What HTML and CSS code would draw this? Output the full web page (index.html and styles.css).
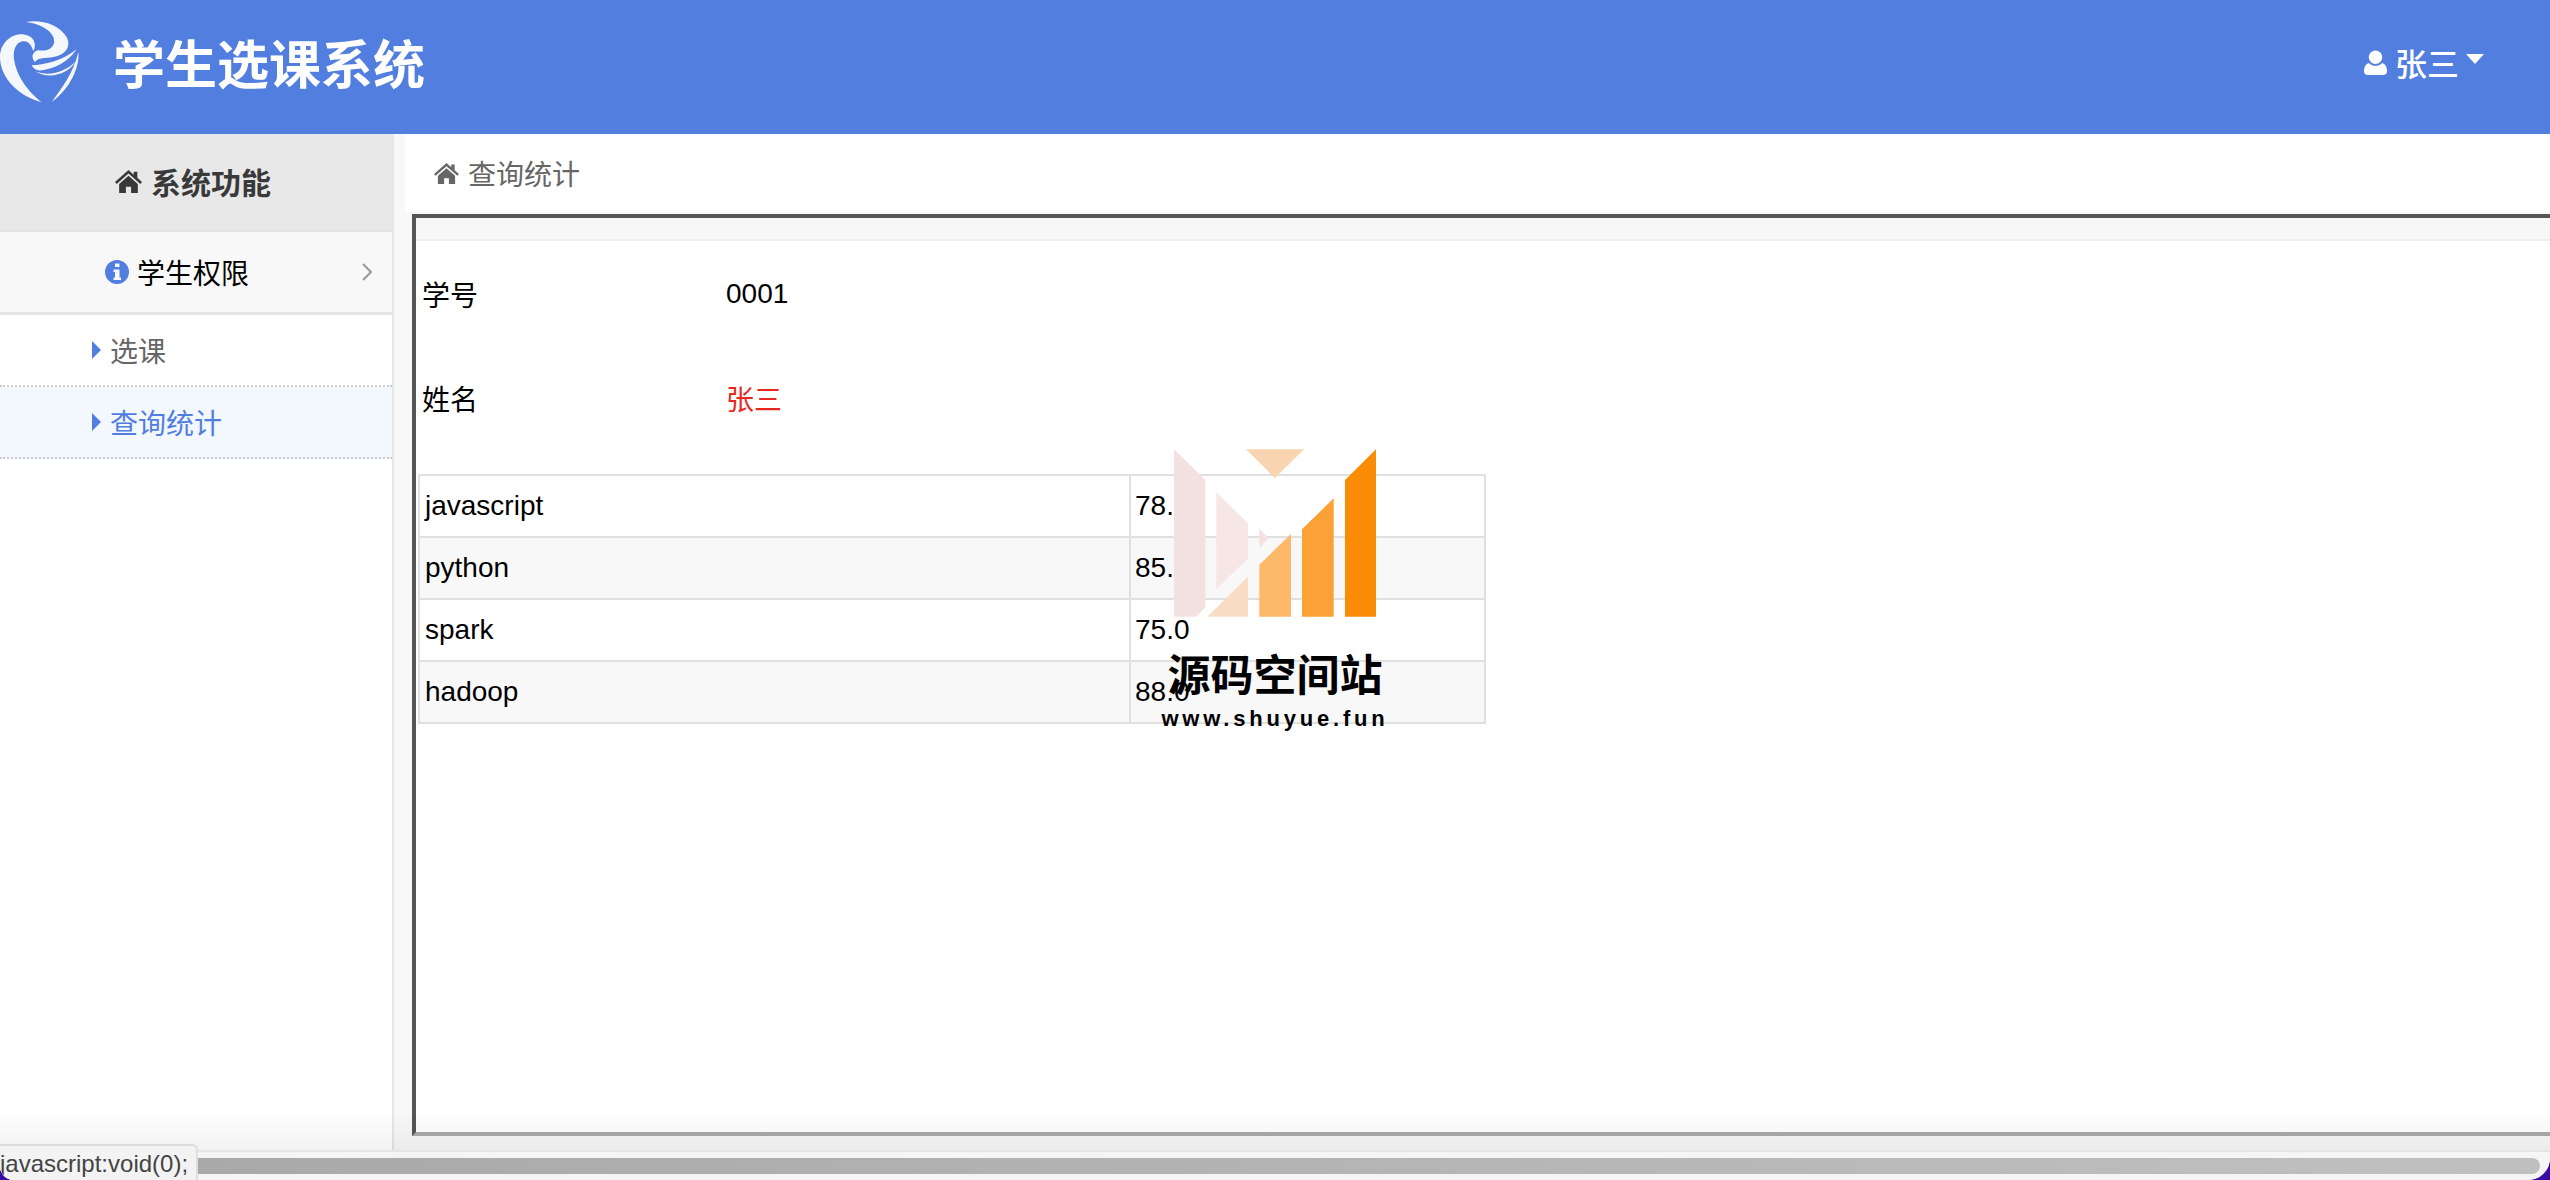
FILE: index.html
```html
<!DOCTYPE html>
<html lang="zh">
<head>
  <meta charset="UTF-8">
  <title>学生选课系统</title>
  <link rel="stylesheet" href="styles.css">
</head>
<body>
  <div class="window">
    <header class="topbar">
      <div class="brand">
        <svg class="logo" viewBox="0 0 270 300">
          <g fill="#f4f8fd">
            <path d="M125 270C60 255 0 200 0 135C0 90 40 60 75 68C100 72 112 95 100 118C95 100 85 85 68 88C48 92 38 115 42 140C48 190 85 240 125 270Z"/>
            <path d="M78 30C120 22 175 35 200 75C215 105 195 130 160 135C135 140 115 135 105 150C90 135 100 118 115 115C150 120 170 100 160 75C148 50 115 35 78 30Z"/>
            <path d="M95 160C130 160 190 145 230 112C205 150 160 172 125 175C110 178 100 170 95 160Z"/>
            <path d="M105 178C150 195 195 180 228 148C205 185 150 205 105 178Z"/>
            <path d="M235 120C240 170 205 235 155 270C185 230 222 180 235 120Z"/>
          </g>
        </svg>
        <span class="brand-name">学生选课系统</span>
      </div>
      <a class="user-menu" href="javascript:void(0);">
        <svg class="icon-user" viewBox="0 0 24 26"><circle cx="12" cy="7.500" r="7"/><path d="M5 13.500c2 2 4.500 3 7 3s5-1 7-3c3 1 5 4 5 8v1c0 2-1.500 3.500-3.500 3.500h-17C1.500 26 0 24.500 0 22.500v-1c0-4 2-7 5-8z"/></svg>
        <span class="user-name">张三</span>
        <svg class="icon-caret" viewBox="0 0 18 10"><path d="M0 0h18L9 10z"/></svg>
      </a>
    </header>

    <div class="main">
      <aside class="sidebar">
        <div class="side-title">
          <svg class="icon-home" viewBox="0 0 26 22"><path d="M13 0l5 4.400V1.500h3.500v6l4.500 4-1.600 1.800L13 3.400 1.600 13.300 0 11.500z"/><path d="M13 5.500l9 7.800V22h-6.500v-6h-5v6H4v-8.700z"/></svg>
          <span>系统功能</span>
        </div>
        <div class="side-group">
          <svg class="icon-info" viewBox="0 0 24 24"><path fill-rule="evenodd" d="M12 0a12 12 0 1 0 0 24 12 12 0 0 0 0-24zM10 3.500h4.500v3.500H10zM8.500 9.500h6v8H16V20H8.500v-2.500H10V12H8.500z"/></svg>
          <span class="side-group-name">学生权限</span>
          <svg class="icon-chevron" viewBox="0 0 10 18"><path d="M1 1l8 8-8 8" fill="none" stroke="#999" stroke-width="2"/></svg>
        </div>
        <a class="side-link" href="#"><i class="arrow"></i>选课</a>
        <a class="side-link active" href="#"><i class="arrow"></i>查询统计</a>
      </aside>

      <section class="content">
        <div class="crumb">
          <svg class="icon-home small" viewBox="0 0 26 22"><path d="M13 0l5 4.400V1.500h3.500v6l4.500 4-1.600 1.800L13 3.400 1.600 13.300 0 11.500z"/><path d="M13 5.500l9 7.800V22h-6.500v-6h-5v6H4v-8.700z"/></svg>
          <span>查询统计</span>
        </div>
        <div class="frame">
          <div class="frame-top"></div>
          <div class="frame-body">
            <div class="info-row"><span class="info-label">学号</span><span>0001</span></div>
            <div class="info-row"><span class="info-label">姓名</span><span class="red">张三</span></div>
            <table class="score-table">
              <tr><td class="course">javascript</td><td>78.0</td></tr>
              <tr><td class="course">python</td><td>85.0</td></tr>
              <tr><td class="course">spark</td><td>75.0</td></tr>
              <tr><td class="course">hadoop</td><td>88.0</td></tr>
            </table>
          </div>
        </div>
      </section>
    </div>

    <div class="hscroll"><div class="hscroll-thumb"></div></div>

    <div class="watermark">
      <svg class="wm-mark" viewBox="222 88 606 502">
        <polygon fill="#f3e0e0" points="222,88 316,180 316,562 288,590 222,590"/>
        <polygon fill="#f6e6e6" points="349,217 444,310 444,415 349,508"/>
        <polygon fill="#f6e0e0" points="478,327 506,355 478,384"/>
        <polygon fill="#f8d4b0" points="438,88 612,88 525,174"/>
        <polygon fill="#f8dcc4" points="322,590 444,470 444,590"/>
        <polygon fill="#fdb96a" points="478,434 573,342 573,590 478,590"/>
        <polygon fill="#fca135" points="606,328 701,235 701,590 606,590"/>
        <polygon fill="#fb8c05" points="735,180 828,88 828,590 735,590"/>
      </svg>
      <div class="wm-name">源码空间站</div>
      <div class="wm-url">www.shuyue.fun</div>
    </div>

    <div class="bottom-fade"></div>
    <div class="status-tip">javascript:void(0);</div>
  </div>
</body>
</html>
```

FILE: styles.css
```css
html, body {
  margin: 0;
  padding: 0;
  height: 100%;
  overflow: hidden;
  background-color: #3a0ca3;
}
body {
  font-family: "Liberation Sans", "Noto Sans CJK SC", sans-serif;
  font-size: 28px;
  color: #000;
}
a {
  text-decoration: none;
}
.window {
  position: relative;
  display: flex;
  flex-direction: column;
  height: 1180px;
  overflow: hidden;
  background-color: #fff;
  border-radius: 0 0 22px 14px;
}

/* header */
.topbar {
  flex: none;
  display: flex;
  align-items: center;
  justify-content: space-between;
  box-sizing: border-box;
  height: 134px;
  padding-bottom: 10px;
  background-color: #527ee0;
  color: #fff;
}
.brand {
  display: flex;
  align-items: center;
}
.logo {
  width: 90px;
  height: 100px;
  filter: blur(0.7px);
}
.brand-name {
  margin: -2px 0 0 23px;
  font-size: 52px;
  font-weight: bold;
}
.user-menu {
  display: flex;
  align-items: center;
  margin-right: 66px;
  color: #fff;
  font-size: 32px;
}
.user-name {
  font-weight: 500;
}
.icon-user {
  width: 23px;
  height: 27px;
  margin-right: 8px;
  fill: #fff;
}
.icon-caret {
  width: 18px;
  height: 10px;
  margin: -6px 0 0 7px;
  fill: #fff;
}

.main {
  flex: 1;
  display: flex;
  min-height: 0;
  background-color: #f8f8f8;
}

/* sidebar */
.sidebar {
  flex: none;
  width: 392px;
  background-color: #fff;
  border-right: 2px solid #e5e5e5;
}
.side-title {
  display: flex;
  align-items: center;
  justify-content: center;
  height: 94px;
  padding: 0 6px 2px 0;
  background-color: #e8e8e8;
  border-bottom: 2px solid #e2e2e2;
  color: #393939;
  font-size: 30px;
  font-weight: bold;
}
.icon-home {
  width: 27px;
  height: 23px;
  margin-right: 9px;
  fill: #393939;
}
.icon-home.small {
  width: 25px;
  height: 21px;
  fill: #666;
}
.side-group {
  display: flex;
  align-items: center;
  height: 80px;
  padding-left: 105px;
  background-color: #f8f8f8;
  border-bottom: 3px solid #e5e5e5;
}
.icon-info {
  width: 24px;
  height: 24px;
  margin-right: 8px;
  fill: #527ee0;
}
.side-group-name {
  flex: 1;
}
.icon-chevron {
  width: 10px;
  height: 18px;
  margin-right: 20px;
}
.side-link {
  display: flex;
  align-items: center;
  height: 70px;
  padding-left: 92px;
  border-bottom: 2px dotted #ccc;
  color: #666;
}
.side-link.active {
  background-color: #f3f7fe;
  color: #527ee0;
}
.arrow {
  width: 0;
  height: 0;
  margin-right: 9px;
  border-top: 9px solid transparent;
  border-bottom: 9px solid transparent;
  border-left: 9px solid #527ee0;
}

/* content */
.content {
  flex: 1;
  display: flex;
  flex-direction: column;
  min-width: 0;
  margin-left: 11px;
}
.crumb {
  flex: none;
  display: flex;
  align-items: center;
  height: 78px;
  padding-left: 29px;
  background-color: #fff;
  color: #666;
}
.crumb .icon-home {
  margin-right: 9px;
}
.frame {
  flex: 1;
  margin: 2px 0 14px 7px;
  border-style: solid;
  border-width: 4px 0 4px 4px;
  border-color: #555 #555 #aaa #555;
  background-color: #fff;
}
.frame-top {
  height: 21px;
  background-color: #f7f7f7;
  border-bottom: 2px solid #eee;
}
.frame-body {
  margin-left: 2px;
}
.info-row {
  display: flex;
  align-items: center;
  box-sizing: border-box;
  height: 104px;
  padding: 2px 0 0 4px;
}
.info-label {
  width: 304px;
}
.red {
  color: #e8281e;
}
.score-table {
  width: 1068px;
  margin-top: 25px;
  border-collapse: collapse;
}
.score-table td {
  height: 60px;
  padding: 0 4px;
  border: 2px solid #e0e0e0;
}
.score-table tr:nth-child(even) {
  background-color: #f8f8f8;
}
.score-table .course {
  width: 700px;
  padding-left: 5px;
}

/* bottom scrollbar */
.hscroll {
  flex: none;
  height: 28px;
  padding-left: 198px;
  background-color: #f5f5f5;
  border-top: 2px solid #e5e5e5;
}
.hscroll-thumb {
  width: 2342px;
  height: 16px;
  margin-top: 6px;
  border-radius: 0 8px 8px 0;
  background: linear-gradient(to right, #a9a9a9, #c0c0c0);
}

/* overlays */
.watermark {
  position: absolute;
  left: 1163px;
  top: 449px;
  width: 224px;
  display: flex;
  flex-direction: column;
  align-items: center;
}
.wm-mark {
  display: block;
  width: 202px;
  height: 168px;
}
.wm-name {
  margin-top: 29px;
  font-size: 43px;
  line-height: 60px;
  font-weight: bold;
  white-space: nowrap;
}
.wm-url {
  font-size: 22px;
  line-height: 26px;
  font-weight: bold;
  letter-spacing: 3.800px;
  white-space: nowrap;
}
.bottom-fade {
  position: absolute;
  left: 0;
  right: 0;
  bottom: 30px;
  height: 40px;
  background: linear-gradient(to bottom, rgba(0, 0, 0, 0), rgba(0, 0, 0, 0.05));
  pointer-events: none;
}
.status-tip {
  position: absolute;
  left: 0;
  bottom: 0;
  width: 196px;
  height: 34px;
  line-height: 36px;
  background-color: #f3f3f3;
  border: 2px solid #ddd;
  border-width: 2px 2px 0 0;
  border-radius: 0 6px 0 0;
  color: #444;
  font-size: 24px;
  white-space: nowrap;
  overflow: hidden;
}
```
